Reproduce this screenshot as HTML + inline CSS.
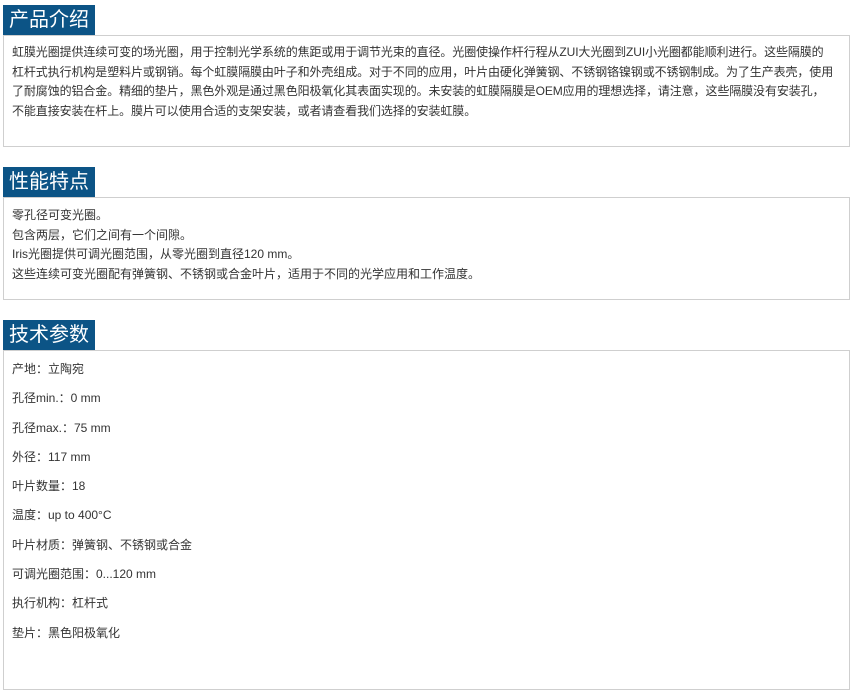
<!DOCTYPE html>
<html><head><meta charset="utf-8"><style>
body{margin:0;background:#fff;font-family:"Liberation Sans","Noto Sans CJK SC",sans-serif;color:#333;font-size:12px;}
.t{position:absolute;left:3px;width:92px;height:30px;background:#0c5486;color:#fff;font-size:20px;line-height:30px;text-align:center;}
.b{position:absolute;left:3px;width:847px;border:1px solid #cfcfcf;padding:0 8px;box-sizing:border-box;}
.b div{line-height:19.5px}
.b div.p{line-height:29.3px}
.w div{white-space:nowrap;letter-spacing:-0.1px}
</style></head><body>
<div class="t" style="top:5px">产品介绍</div>
<div class="b w" style="top:35px;height:112px;padding-top:7px;">
<div>虹膜光圈提供连续可变的场光圈，用于控制光学系统的焦距或用于调节光束的直径。光圈使操作杆行程从ZUI大光圈到ZUI小光圈都能顺利进行。这些隔膜的</div>
<div>杠杆式执行机构是塑料片或钢销。每个虹膜隔膜由叶子和外壳组成。对于不同的应用，叶片由硬化弹簧钢、不锈钢铬镍钢或不锈钢制成。为了生产表壳，使用</div>
<div>了耐腐蚀的铝合金。精细的垫片，黑色外观是通过黑色阳极氧化其表面实现的。未安装的虹膜隔膜是OEM应用的理想选择，请注意，这些隔膜没有安装孔，</div>
<div>不能直接安装在杆上。膜片可以使用合适的支架安装，或者请查看我们选择的安装虹膜。</div>
</div>
<div class="t" style="top:167px">性能特点</div>
<div class="b" style="top:197px;height:103px;padding-top:8px;">
<div>零孔径可变光圈。</div>
<div>包含两层，它们之间有一个间隙。</div>
<div>Iris光圈提供可调光圈范围，从零光圈到直径120 mm。</div>
<div>这些连续可变光圈配有弹簧钢、不锈钢或合金叶片，适用于不同的光学应用和工作温度。</div>
</div>
<div class="t" style="top:320px">技术参数</div>
<div class="b" style="top:350px;height:340px;padding-top:4px;">
<div class="p">产地：立陶宛</div>
<div class="p">孔径min.：0 mm</div>
<div class="p">孔径max.：75 mm</div>
<div class="p">外径：117 mm</div>
<div class="p">叶片数量：18</div>
<div class="p">温度：up to 400°C</div>
<div class="p">叶片材质：弹簧钢、不锈钢或合金</div>
<div class="p">可调光圈范围：0...120 mm</div>
<div class="p">执行机构：杠杆式</div>
<div class="p">垫片：黑色阳极氧化</div>
</div>
</body></html>
